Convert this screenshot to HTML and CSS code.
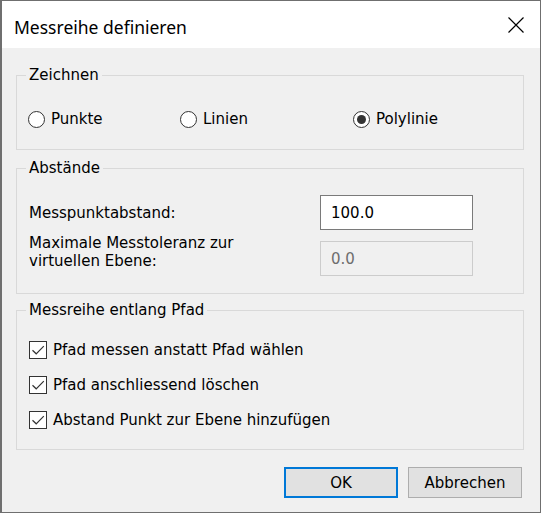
FILE: index.html
```html
<!DOCTYPE html>
<html lang="de">
<head>
<meta charset="utf-8">
<title>Messreihe definieren</title>
<link rel="stylesheet" href="styles.css">
</head>
<body>
<div class="window">
  <div class="titlebar">
    <span class="title">Messreihe definieren</span>
    <svg class="close" width="16" height="16" viewBox="0 0 16 16" aria-hidden="true">
      <path d="M0.5 0.5 L15.5 15.5 M15.5 0.5 L0.5 15.5" stroke="#000" stroke-width="1.2" fill="none"/>
    </svg>
  </div>
  <div class="content">
    <fieldset class="group group-draw">
      <legend>Zeichnen</legend>
      <div class="radios">
        <label class="radio"><span class="rb"></span>Punkte</label>
        <label class="radio"><span class="rb"></span>Linien</label>
        <label class="radio"><span class="rb checked"></span>Polylinie</label>
      </div>
    </fieldset>

    <fieldset class="group group-dist">
      <legend>Abstände</legend>
      <div class="fields">
        <span class="lbl lbl-center">Messpunktabstand:</span>
        <span class="input">100.0</span>
        <span class="lbl lbl-top">Maximale Messtoleranz zur<br>virtuellen Ebene:</span>
        <span class="input input-disabled">0.0</span>
      </div>
    </fieldset>

    <fieldset class="group group-path">
      <legend>Messreihe entlang Pfad</legend>
      <div class="checks">
        <label class="check"><span class="cb"><svg width="16" height="16" viewBox="0 0 16 16"><path d="M2.5 8.2 L6.2 11.8 L13.8 4.2" stroke="#333" stroke-width="1.2" fill="none"/></svg></span>Pfad messen anstatt Pfad wählen</label>
        <label class="check"><span class="cb"><svg width="16" height="16" viewBox="0 0 16 16"><path d="M2.5 8.2 L6.2 11.8 L13.8 4.2" stroke="#333" stroke-width="1.2" fill="none"/></svg></span>Pfad anschliessend löschen</label>
        <label class="check"><span class="cb"><svg width="16" height="16" viewBox="0 0 16 16"><path d="M2.5 8.2 L6.2 11.8 L13.8 4.2" stroke="#333" stroke-width="1.2" fill="none"/></svg></span>Abstand Punkt zur Ebene hinzufügen</label>
      </div>
    </fieldset>

    <div class="buttons">
      <button class="btn btn-default">OK</button>
      <button class="btn">Abbrechen</button>
    </div>
  </div>
</div>
</body>
</html>
```

FILE: styles.css
```css
html, body {
  margin: 0;
  padding: 0;
  background: #ffffff;
}

body {
  font-family: "DejaVu Sans", "Liberation Sans", sans-serif;
  font-size: 15px;
  color: #000;
}

.window {
  width: 541px;
  height: 513px;
  box-sizing: border-box;
  border: 1px solid #6f6f6f;
  border-left-width: 2px;
  background: #f0f0f0;
  display: flex;
  flex-direction: column;
}

.titlebar {
  height: 47px;
  background: #ffffff;
  display: flex;
  align-items: center;
  justify-content: space-between;
  padding: 0 16px 0 12px;
  box-sizing: border-box;
}

.title {
  font-family: "Noto Sans", "Open Sans", sans-serif;
  font-size: 17.5px;
  line-height: 22px;
  padding-top: 4px;
  color: #000;
}

.close {
  display: block;
}

.content {
  padding: 18px 16px 0 14px;
  display: flex;
  flex-direction: column;
}

.group {
  margin: 0;
  border: 1px solid #d9d9d9;
  padding: 0 12px;
  min-inline-size: 0;
}

.group legend {
  padding: 0 3px;
  margin-left: -3px;
  line-height: 18px;
  font-size: 15px;
}

.group-draw {
  padding-top: 25px;
  padding-bottom: 20px;
}

.group-dist {
  margin-top: 9px;
  padding-top: 18px;
  padding-bottom: 17px;
}

.group-path {
  margin-top: 7px;
  padding-top: 21px;
  padding-bottom: 19px;
}

.radios {
  display: grid;
  grid-template-columns: 152px 173px auto;
  margin-left: -1px;
}

.radio,
.check {
  display: flex;
  align-items: center;
  height: 20px;
  gap: 6px;
  white-space: nowrap;
}

.rb {
  width: 17px;
  height: 17px;
  box-sizing: border-box;
  border: 1.5px solid #333;
  border-radius: 50%;
  background: #fff;
  display: flex;
  align-items: center;
  justify-content: center;
}

.rb.checked::after {
  content: "";
  width: 9px;
  height: 9px;
  border-radius: 50%;
  background: #333;
}

.fields {
  display: grid;
  grid-template-columns: 291px 153px;
  row-gap: 2px;
}

.lbl {
  line-height: 18px;
}

.lbl-center {
  align-self: center;
}

.lbl-top {
  align-self: start;
  margin-top: 2px;
}

.input {
  height: 35px;
  box-sizing: border-box;
  border: 1px solid #7a7a7a;
  background: #fff;
  padding: 0 10px;
  display: flex;
  align-items: center;
}

.input-disabled {
  margin-top: 9px;
  border-color: #cccccc;
  background: #f0f0f0;
  color: #6d6d6d;
}

.checks {
  display: flex;
  flex-direction: column;
  gap: 15px;
}

.cb {
  width: 16px;
  height: 16px;
  border: 1px solid #333;
  background: #fff;
  display: block;
}

.cb svg {
  display: block;
}

.buttons {
  display: flex;
  justify-content: flex-end;
  gap: 10px;
  margin-top: 17px;
  margin-right: 2px;
}

.btn {
  width: 114px;
  height: 31px;
  box-sizing: border-box;
  border: 1px solid #adadad;
  background: #e1e1e1;
  font-family: "DejaVu Sans", "Liberation Sans", sans-serif;
  font-size: 15px;
  color: #000;
  padding: 0;
}

.btn-default {
  border: 2px solid #0078d7;
}
```
